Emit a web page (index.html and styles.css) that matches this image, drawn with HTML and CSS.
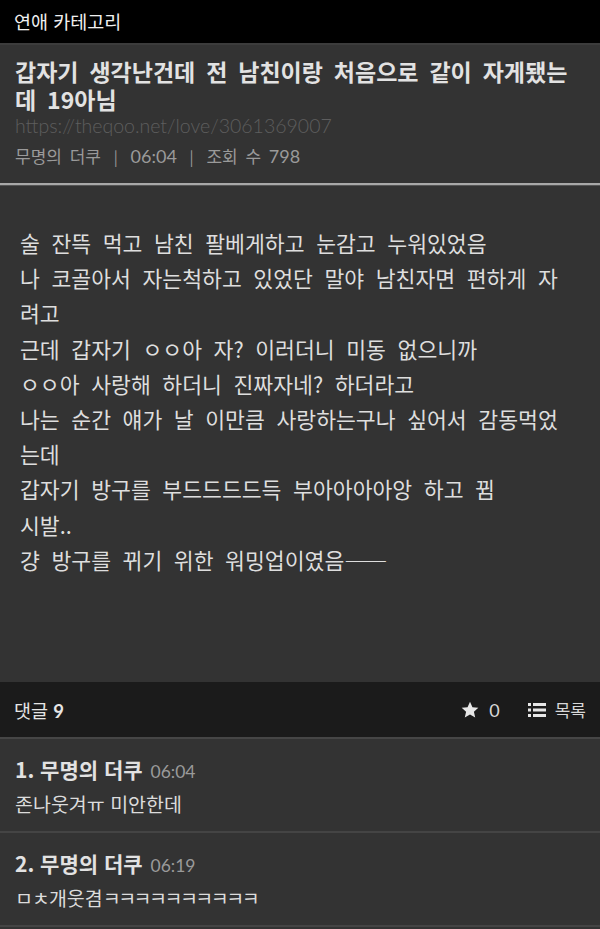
FILE: index.html
```html
<!DOCTYPE html>
<html lang="ko">
<head>
<meta charset="utf-8">
<link rel="stylesheet" href="styles.css">
</head>
<body>
<div class="topbar">연애 카테고리</div>
<div class="post-head">
  <h1 class="title">갑자기 생각난건데 전 남친이랑 처음으로 같이 자게됐는데 19아님</h1>
  <div class="url">https://theqoo.net/love/3061369007</div>
  <div class="meta">무명의 더쿠 <span class="bar">|</span> <span class="num">06:04</span> <span class="bar">|</span> 조회 수 <span class="num">798</span></div>
</div>
<div class="post-body">
  <p>술 잔뜩 먹고 남친 팔베게하고 눈감고 누워있었음<br>나 코골아서 자는척하고 있었단 말야 남친자면 편하게 자려고<br>근데 갑자기 ㅇㅇ아 자? 이러더니 미동 없으니까<br>ㅇㅇ아 사랑해 하더니 진짜자네? 하더라고<br>나는 순간 얘가 날 이만큼 사랑하는구나 싶어서 감동먹었는데<br>갑자기 방구를 부드드드드득 부아아아아앙 하고 뀜<br>시발..<br>걍 방구를 뀌기 위한 워밍업이였음——</p>
</div>
<div class="cbar">
  <div class="ccount">댓글 <b>9</b></div>
  <div class="actions">
    <span class="act"><svg class="star" viewBox="0 0 24 24" width="20" height="20"><path d="M12 2.2l2.95 6.5 7.05.7-5.3 4.75 1.55 6.95L12 17.5l-6.25 3.6 1.55-6.95L2 9.4l7.05-.7z" fill="#e6e6e6"/></svg><span class="num">0</span></span>
    <span class="act"><svg class="list" viewBox="0 0 18 16" width="18" height="16"><rect x="0" y="1" width="3" height="3" fill="#e6e6e6"/><rect x="5" y="1" width="13" height="3" fill="#e6e6e6"/><rect x="0" y="6.5" width="3" height="3" fill="#e6e6e6"/><rect x="5" y="6.5" width="13" height="3" fill="#e6e6e6"/><rect x="0" y="12" width="3" height="3" fill="#e6e6e6"/><rect x="5" y="12" width="13" height="3" fill="#e6e6e6"/></svg><span class="lbl">목록</span></span>
  </div>
</div>
<div class="comment">
  <div class="chead"><b>1. 무명의 더쿠</b> <span class="time">06:04</span></div>
  <div class="ctext">존나웃겨ㅠ 미안한데</div>
</div>
<div class="comment">
  <div class="chead"><b>2. 무명의 더쿠</b> <span class="time">06:19</span></div>
  <div class="ctext"><span class="jm">ㅁㅊ</span>개웃겸<span class="kk">ㅋㅋㅋㅋㅋㅋㅋㅋㅋㅋ</span></div>
</div>
</body>
</html>
```
FILE: styles.css
```css
html, body {
  margin: 0;
  padding: 0;
  background: #333333;
}
body {
  font-family: "Noto Sans CJK KR", "Noto Sans", sans-serif;
  color: #dcdcdc;
  width: 600px;
  overflow: hidden;
}
.topbar {
  background: #000;
  height: 43px;
  line-height: 43px;
  padding-left: 14px;
  font-size: 18.5px;
  color: #f0f0f0;
  border-bottom: 2px solid #3c3c3c;
}
.post-head {
  padding: 12px 14px 0 15px;
  height: 126px;
  border-bottom: 2px solid #a8a8a8;
  box-shadow: 0 1px 0 #555;
}
.title {
  margin: 0;
  font-size: 23px;
  font-weight: bold;
  line-height: 28px;
  color: #e2e2e2;
  word-spacing: 4.5px;
}
.url {
  margin-top: 1px;
  font-family: "Lato", "Noto Sans", sans-serif;
  font-weight: 300;
  font-size: 19.5px;
  color: #5e5e5e;
  line-height: 24px;
}
.meta {
  margin-top: 6px;
  font-size: 17px;
  color: #9a9a9a;
  line-height: 24px;
  word-spacing: 3px;
}
.meta .num {
  font-family: "Lato", sans-serif;
  font-size: 18px;
}
.meta .bar {
  padding: 0 5px;
  font-size: 15px;
}
.post-body {
  height: 497px;
  padding: 0 35px 0 20px;
}
.post-body p {
  margin: 0;
  padding-top: 40px;
  font-size: 21.6px;
  line-height: 35.2px;
  color: #dedede;
  word-spacing: 5.5px;
}
.cbar {
  height: 55px;
  background: #1b1b1b;
  border-bottom: 2px solid #464646;
  display: flex;
  align-items: center;
  justify-content: space-between;
  padding: 0 14px;
}
.ccount {
  font-size: 18.5px;
  color: #e6e6e6;
}
.ccount b {
  font-family: "Lato", sans-serif;
  font-weight: bold;
}
.actions {
  display: flex;
  align-items: center;
  gap: 28px;
}
.act {
  display: flex;
  align-items: center;
  gap: 9px;
  font-size: 17px;
  color: #d8d8d8;
}
.act .num {
  font-family: "Lato", sans-serif;
  font-size: 18px;
}
.comment {
  height: 92px;
  border-bottom: 2px solid #444;
  padding: 0 15px;
}
.chead {
  padding-top: 17px;
  font-size: 21px;
  line-height: 26px;
  color: #e2e2e2;
}
.chead .time {
  font-family: "Lato", sans-serif;
  font-size: 17.5px;
  color: #9a9a9a;
  margin-left: 2px;
}
.ctext {
  font-size: 19.5px;
  line-height: 26px;
  margin-top: 6px;
  color: #dcdcdc;
}
.ctext .jm {
  letter-spacing: -1px;
}
.ctext .kk {
  letter-spacing: -2.5px;
}
```
